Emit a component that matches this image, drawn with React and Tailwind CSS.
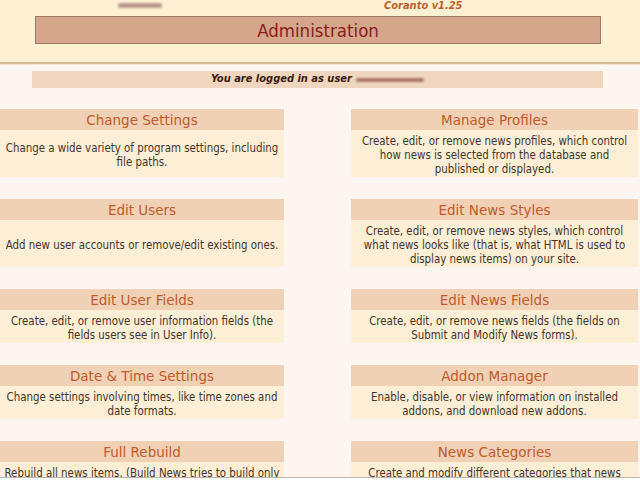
import React from "react";

const rows = [
  [
    { t: "Change Settings", d: ["Change a wide variety of program settings, including", "file paths."] },
    { t: "Manage Profiles", d: ["Create, edit, or remove news profiles, which control", "how news is selected from the database and", "published or displayed."] },
  ],
  [
    { t: "Edit Users", d: ["Add new user accounts or remove/edit existing ones."] },
    { t: "Edit News Styles", d: ["Create, edit, or remove news styles, which control", "what news looks like (that is, what HTML is used to", "display news items) on your site."] },
  ],
  [
    { t: "Edit User Fields", d: ["Create, edit, or remove user information fields (the", "fields users see in User Info)."] },
    { t: "Edit News Fields", d: ["Create, edit, or remove news fields (the fields on", "Submit and Modify News forms)."] },
  ],
  [
    { t: "Date & Time Settings", d: ["Change settings involving times, like time zones and", "date formats."] },
    { t: "Addon Manager", d: ["Enable, disable, or view information on installed", "addons, and download new addons."] },
  ],
  [
    { t: "Full Rebuild", d: ["Rebuild all news items. (Build News tries to build only", "those items that have changed.)"] },
    { t: "News Categories", d: ["Create and modify different categories that news", "can be posted in."] },
  ],
];

function Card({ item, className }) {
  return (
    <div className={"flex flex-col " + className}>
      <div
        className="h-[21px] bg-[#f0d1b5] flex items-center justify-center text-[13.5px] leading-[16px] text-[#bf5a2b]"
        style={{ fontFamily: '"DejaVu Sans", sans-serif' }}
      >
        {item.t}
      </div>
      <div className="flex-1 bg-[#fdefd6] flex flex-col items-center justify-center pt-[4px] pb-[1px] text-[11.4px] leading-[14px] text-[#44352c] text-center">
        {item.d.map((l, i) => (
          <div key={i} className="whitespace-nowrap">{l}</div>
        ))}
      </div>
    </div>
  );
}

export default function App() {
  return (
    <div
      className="w-[640px] h-[480px] overflow-hidden flex flex-col bg-[#fdf6f0] relative"
      style={{ fontFamily: '"DejaVu Sans Condensed", "DejaVu Sans", sans-serif' }}
    >
      <div className="h-[62px] shrink-0 bg-[#fdf0d3] relative">
        <div className="absolute left-[118px] top-[3px] w-[44px] h-[5px] rounded-full bg-[#b8988a] blur-[1px]"></div>
        <div className="absolute left-[384px] top-0 text-[11px] font-bold italic text-[#c0602e] leading-[11px]">
          Coranto v1.25
        </div>
        <div className="absolute left-[35px] top-[16px] w-[566px] h-[28px] bg-[#d5a68c] border border-[#9e7a64] flex items-center justify-center pt-[1px] text-[18.5px] text-[#8a1c1c]">
          Administration
        </div>
      </div>
      <div className="h-[2px] shrink-0 bg-[#d8b696]"></div>
      <div className="h-[1px] shrink-0 bg-[#f3e4d4]"></div>
      <div className="pt-[6px] pl-[32px] shrink-0">
        <div className="w-[571px] h-[17px] bg-[#f0d6be] flex items-center justify-center gap-[4px] text-[11px] font-bold italic text-[#3a1c12]">
          <span>You are logged in as user</span>
          <span className="inline-block w-[68px] h-[4px] rounded-full bg-[#a9786a] blur-[1px]"></span>
        </div>
      </div>
      <div className="flex flex-col gap-[22px] pt-[21px]">
        {rows.map((r, i) => (
          <div key={i} className="flex items-stretch">
            <Card item={r[0]} className="w-[284px]" />
            <div className="w-[67px]"></div>
            <Card item={r[1]} className="w-[287px]" />
          </div>
        ))}
      </div>
      <div className="absolute left-0 right-0 bottom-0 h-[3px] bg-white border-t border-[#b9b6b2]"></div>
    </div>
  );
}
